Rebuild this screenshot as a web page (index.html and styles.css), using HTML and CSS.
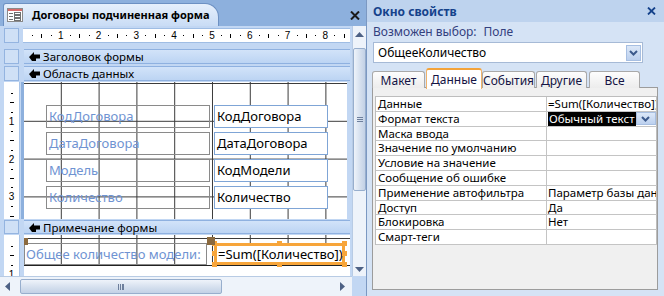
FILE: index.html
```html
<!DOCTYPE html>
<html lang="ru">
<head>
<meta charset="utf-8">
<title>Договоры подчиненная форма</title>
<link rel="stylesheet" href="styles.css">
</head>
<body>
<div class="app">
  <div class="left">
    <div class="doc-strip">
      <div class="doc-tab">
        <svg class="form-icon" width="16" height="14" viewBox="0 0 16 14">
          <rect x="0.5" y="0.5" width="15" height="13" fill="#fff" stroke="#8a8a8a"/>
          <rect x="1" y="1" width="14" height="2" fill="#d86b6b"/>
          <rect x="2" y="5" width="4" height="1" fill="#6f6f6f"/>
          <rect x="2" y="8" width="4" height="1" fill="#6f6f6f"/>
          <rect x="2" y="11" width="4" height="1" fill="#6f6f6f"/>
          <rect x="7.5" y="4.5" width="6" height="2" fill="#fff" stroke="#6f6f6f"/>
          <rect x="7.5" y="7.5" width="6" height="2" fill="#fff" stroke="#6f6f6f"/>
          <rect x="7.5" y="10.5" width="6" height="2" fill="#fff" stroke="#6f6f6f"/>
        </svg>
        <span class="doc-title">Договоры подчиненная форма</span>
      </div>
      <svg class="doc-close" width="10" height="9" viewBox="0 0 10 9">
        <path d="M1 0.5 L9 8.5 M9 0.5 L1 8.5" stroke="#1b1b1b" stroke-width="2"/>
      </svg>
    </div>
    <div class="doc-body">
      <div class="canvas">
        <div class="crow ruler-row">
          <div class="lcol"><div class="corner"></div></div>
          <div class="hruler">
            <div class="cm"><span class="q"><i class="dot"></i></span><span class="q"><i class="bar"></i></span><span class="q"><i class="dot"></i></span><span class="q"><b class="num">1</b></span></div>
            <div class="cm"><span class="q"><i class="dot"></i></span><span class="q"><i class="bar"></i></span><span class="q"><i class="dot"></i></span><span class="q"><b class="num">2</b></span></div>
            <div class="cm"><span class="q"><i class="dot"></i></span><span class="q"><i class="bar"></i></span><span class="q"><i class="dot"></i></span><span class="q"><b class="num">3</b></span></div>
            <div class="cm"><span class="q"><i class="dot"></i></span><span class="q"><i class="bar"></i></span><span class="q"><i class="dot"></i></span><span class="q"><b class="num">4</b></span></div>
            <div class="cm"><span class="q"><i class="dot"></i></span><span class="q"><i class="bar"></i></span><span class="q"><i class="dot"></i></span><span class="q"><b class="num">5</b></span></div>
            <div class="cm"><span class="q"><i class="dot"></i></span><span class="q"><i class="bar"></i></span><span class="q"><i class="dot"></i></span><span class="q"><b class="num">6</b></span></div>
            <div class="cm"><span class="q"><i class="dot"></i></span><span class="q"><i class="bar"></i></span><span class="q"><i class="dot"></i></span><span class="q"><b class="num">7</b></span></div>
            <div class="cm"><span class="q"><i class="dot"></i></span><span class="q"><i class="bar"></i></span><span class="q"><i class="dot"></i></span><span class="q"><b class="num">8</b></span></div>
            <div class="cm"><span class="q"><i class="dot"></i></span><span class="q"><i class="bar"></i></span><span class="q"><i class="dot"></i></span></div>
          </div>
        </div>

        <div class="crow sec-row sec-first">
          <div class="lcol"><div class="vbox"></div></div>
          <div class="secbar"><svg class="sec-arrow" width="11" height="9" viewBox="0 0 11 9"><path d="M0 5 L5 0 L5 2.5 L11 2.5 L11 6.5 L7 6.5 L7 9 L3 9 Z" fill="#000"/></svg><span>Заголовок формы</span></div>
        </div>
        <div class="crow sec-row">
          <div class="lcol"><div class="vbox"></div></div>
          <div class="secbar"><svg class="sec-arrow" width="11" height="9" viewBox="0 0 11 9"><path d="M0 5 L5 0 L5 2.5 L11 2.5 L11 6.5 L7 6.5 L7 9 L3 9 Z" fill="#000"/></svg><span>Область данных</span></div>
        </div>

        <div class="crow detail-row">
          <div class="lcol"><div class="vruler">
            <div class="vcm"><span class="vq"><i class="hdot"></i></span><span class="vq"><i class="hbar"></i></span><span class="vq"><i class="hdot"></i></span><span class="vq"><b class="vnum">1</b></span></div>
            <div class="vcm"><span class="vq"><i class="hdot"></i></span><span class="vq"><i class="hbar"></i></span><span class="vq"><i class="hdot"></i></span><span class="vq"><b class="vnum">2</b></span></div>
            <div class="vcm"><span class="vq"><i class="hdot"></i></span><span class="vq"><i class="hbar"></i></span><span class="vq"><i class="hdot"></i></span><span class="vq"><b class="vnum">3</b></span></div>
            <div class="vcm"><span class="vq"><i class="hdot"></i></span><span class="vq"><i class="hbar"></i></span><span class="vq"><i class="hdot"></i></span></div>
          </div></div>
          <div class="detail grid-bg">
            <div class="ctl-row"><div class="lbl">КодДоговора</div><div class="tb">КодДоговора</div></div>
            <div class="ctl-row"><div class="lbl">ДатаДоговора</div><div class="tb">ДатаДоговора</div></div>
            <div class="ctl-row"><div class="lbl">Модель</div><div class="tb">КодМодели</div></div>
            <div class="ctl-row"><div class="lbl">Количество</div><div class="tb">Количество</div></div>
          </div>
        </div>

        <div class="crow sec-row sec-foot">
          <div class="lcol"><div class="vbox"></div></div>
          <div class="secbar"><svg class="sec-arrow" width="11" height="9" viewBox="0 0 11 9"><path d="M0 5 L5 0 L5 2.5 L11 2.5 L11 6.5 L7 6.5 L7 9 L3 9 Z" fill="#000"/></svg><span>Примечание формы</span></div>
        </div>

        <div class="crow footer-row">
          <div class="lcol"><div class="vruler vruler-foot">
            <div class="vcm"><span class="vq"><i class="hdot"></i></span><span class="vq"><i class="hbar"></i></span><span class="vq"><i class="hdot"></i></span><span class="vq"><b class="vnum">1</b></span></div>
          </div></div>
          <div class="footer">
            <div class="footer-area grid-bg">
              <div class="ctl-row foot-ctls">
                <div class="lbl lbl-foot">Общее количество модели:</div>
                <div class="tb tb-sel">=Sum([Количество])
                  <i class="h h-tl"></i><i class="h h-tm"></i><i class="h h-tr"></i>
                  <i class="h h-ml"></i><i class="h h-mr"></i>
                  <i class="h h-bl"></i><i class="h h-bm"></i><i class="h h-br"></i>
                </div>
              </div>
              <i class="move move-lbl"></i>
              <i class="move move-tb"></i>
            </div>
          </div>
        </div>
      </div>

      <div class="vscroll">
        <svg class="arr" width="9" height="5" viewBox="0 0 9 5"><path d="M0 5 L4.5 0 L9 5 Z" fill="#4d6185"/></svg>
        <div class="vthumb"><span class="grip-v"></span></div>
        <div class="vspace"></div>
        <svg class="arr" width="9" height="5" viewBox="0 0 9 5"><path d="M0 0 L4.5 5 L9 0 Z" fill="#4d6185"/></svg>
      </div>
      <div class="hscroll">
        <svg class="arr" width="5" height="9" viewBox="0 0 5 9"><path d="M5 0 L0 4.5 L5 9 Z" fill="#4d6185"/></svg>
        <div class="hthumb"><span class="grip-h"></span></div>
        <div class="hspace"></div>
        <svg class="arr" width="5" height="9" viewBox="0 0 5 9"><path d="M0 0 L5 4.5 L0 9 Z" fill="#4d6185"/></svg>
      </div>
      <div class="sizer"></div>
    </div>
  </div>

  <div class="right">
    <div class="ptitle">
      <span>Окно свойств</span>
      <svg class="pclose" width="9" height="8" viewBox="0 0 9 8"><path d="M1 0.5 L8 7.5 M8 0.5 L1 7.5" stroke="#15428b" stroke-width="1.8"/></svg>
    </div>
    <div class="psel"><span>Возможен выбор:</span><span class="psel-val">Поле</span></div>
    <div class="combo">
      <span>ОбщееКоличество</span>
      <span class="dd"><svg width="9" height="6" viewBox="0 0 9 6"><path d="M1 1 L4.5 4.5 L8 1" stroke="#3c5a8c" stroke-width="2" fill="none"/></svg></span>
    </div>
    <div class="tabs">
      <div class="tab t1">Макет</div>
      <div class="tab tab-active t2">Данные</div>
      <div class="tab t3">События</div>
      <div class="tab t4">Другие</div>
      <div class="tab t5">Все</div>
    </div>
    <div class="ppanel">
      <div class="pgrid">
        <div class="pr"><div class="pk">Данные</div><div class="pv">=Sum([Количество])</div></div>
        <div class="pr"><div class="pk">Формат текста</div><div class="pv pv-sel"><span class="hl">Обычный текст</span><span class="dd dd-small"><svg width="9" height="6" viewBox="0 0 9 6"><path d="M1 1 L4.5 4.5 L8 1" stroke="#3c5a8c" stroke-width="2" fill="none"/></svg></span></div></div>
        <div class="pr"><div class="pk">Маска ввода</div><div class="pv"></div></div>
        <div class="pr"><div class="pk">Значение по умолчанию</div><div class="pv"></div></div>
        <div class="pr"><div class="pk">Условие на значение</div><div class="pv"></div></div>
        <div class="pr"><div class="pk">Сообщение об ошибке</div><div class="pv"></div></div>
        <div class="pr"><div class="pk">Применение автофильтра</div><div class="pv">Параметр базы данных</div></div>
        <div class="pr"><div class="pk">Доступ</div><div class="pv">Да</div></div>
        <div class="pr"><div class="pk">Блокировка</div><div class="pv">Нет</div></div>
        <div class="pr"><div class="pk">Смарт-теги</div><div class="pv"></div></div>
      </div>
    </div>
  </div>
</div>
</body>
</html>
```

FILE: styles.css
```css
* { box-sizing: border-box; margin: 0; padding: 0; }
html, body { width: 664px; height: 296px; overflow: hidden; }
body { font-family: "Noto Sans", "Open Sans", sans-serif; font-size: 12px; color: #000; background: #d5e3f5; }
i, b { font-style: normal; font-weight: normal; display: block; }

.app { display: flex; width: 664px; height: 296px; }

/* ---------- left document window ---------- */
.left { width: 366px; display: flex; flex-direction: column; background: #8db0dd; }
.doc-strip { height: 26px; display: flex; align-items: flex-end; padding-left: 3px; }
.doc-tab {
  width: 216px; height: 23px;
  background: linear-gradient(#e6f0fc, #c9dcf5);
  border: 1px solid #6d91c3; border-bottom: none;
  border-radius: 3px 14px 0 0;
  display: flex; align-items: center; gap: 9px; padding-left: 3px;
}
.form-icon { flex: none; }
.doc-title { font-weight: bold; font-size: 11px; line-height: 14px; white-space: nowrap; }
.doc-close { margin-left: auto; margin-right: 6px; align-self: center; margin-top: 4px; }

.doc-body { flex: 1; display: grid; grid-template-columns: 352px 14px; grid-template-rows: 250px 20px; }

.canvas { background: #c2d7f3; padding: 2px 2px 0 4px; display: flex; flex-direction: column; overflow: hidden; }
.crow { display: flex; flex: none; }
.lcol { width: 20px; flex: none; }

.ruler-row { height: 15px; }
.corner { width: 15px; height: 15px; background: #cfe0f6; border: 1px solid #94b4e0; }
.hruler { width: 327px; margin-left: -1px; height: 15px; background: #fff; border-top: 1px solid #9fbde4; border-bottom: 1px solid #9fbde4; display: flex; overflow: hidden; }
.cm { width: 37.8px; flex: none; display: flex; }
.q { width: 9.45px; flex: none; display: flex; justify-content: flex-end; align-items: center; }
.dot { width: 1px; height: 1px; background: #000; margin-right: -0.5px; }
.bar { width: 1px; height: 4px; background: #000; margin-right: -0.5px; }
.num { font-size: 10px; line-height: 12px; width: 8px; text-align: center; margin-right: -4px; font-family: "Liberation Sans", sans-serif; }

.sec-row { height: 15px; margin-top: 2px; }
.sec-first { margin-top: 6px; }
.vbox { width: 15px; height: 15px; background: #cfe0f6; border: 1px solid #94b4e0; }
.secbar {
  width: 326px; height: 15px;
  background: linear-gradient(#d2e3f9, #bcd4f3);
  border-top: 1px solid #8fb1e0; border-bottom: 1px solid #8fb1e0;
  display: flex; align-items: center; gap: 3px; padding-left: 5px;
  font-size: 11.5px; line-height: 13px; color: #000;
}
.sec-arrow { flex: none; }

.detail-row { margin-top: 1px; height: 137px; }
.sec-foot { margin-top: 1px; height: 14px; }
.sec-foot .vbox, .sec-foot .secbar { height: 14px; }
.footer-row { margin-top: 1px; flex: 1; }

.vruler { width: 16px; height: 100%; background: #fff; border-right: 1px solid #a9c4e8; padding-top: 2px; display: flex; flex-direction: column; overflow: hidden; }
.vcm { height: 37.8px; flex: none; display: flex; flex-direction: column; }
.vq { height: 9.45px; flex: none; display: flex; align-items: flex-end; justify-content: center; }
.hdot { width: 2px; height: 1px; background: #000; margin-bottom: -0.5px; }
.hbar { width: 4px; height: 1px; background: #000; margin-bottom: -0.5px; }
.vnum { font-size: 10px; line-height: 12px; height: 12px; margin-bottom: -6px; font-family: "Liberation Sans", sans-serif; }
.vruler-foot { padding-top: 2px; }

.grid-bg {
  background-color: #fff;
  background-image:
    linear-gradient(to right, transparent 36.8px, #3a3a3a 36.8px),
    linear-gradient(to bottom, transparent 36.8px, #3a3a3a 36.8px);
  background-size: 37.8px 37.8px;
  background-position: 0 2px;
}
.detail { width: 326px; height: 137px; padding: 23px 0 0 22px; display: flex; flex-direction: column; gap: 4px; border-left: 3px solid #8db0dd; margin-left: -3px; background-clip: padding-box; }

.ctl-row { display: flex; gap: 4px; }
.lbl { width: 164px; height: 23px; border: 1px solid #8a8a8a; background: transparent; color: #6f93d2; font-size: 13px; line-height: 21px; padding-left: 2px; white-space: nowrap; overflow: hidden; }
.tb { width: 114px; height: 23px; border: 1px solid #7fa5d6; background: #fff; color: #000; font-size: 13px; line-height: 21px; padding-left: 2px; white-space: nowrap; }

.footer { width: 326px; display: flex; flex-direction: column; background: #fff; }
.footer-area { position: relative; height: 31px; border-bottom: 1px solid #222; padding-top: 8px; background-position: 0 4px; }
.foot-ctls { gap: 7px; }
.lbl-foot { width: 183px; height: 22px; line-height: 20px; padding-left: 1px; }
.tb-sel { position: relative; width: 131px; height: 22px; border: 3px solid #f7a53a; line-height: 16px; padding-left: 1px; }
.h { position: absolute; width: 5px; height: 5px; background: #f7a53a; }
.h-tl { left: -5px; top: -5px; } .h-tm { left: 60px; top: -5px; } .h-tr { right: -5px; top: -5px; }
.h-ml { left: -5px; top: 5px; } .h-mr { right: -5px; top: 5px; }
.h-bl { left: -5px; bottom: -5px; } .h-bm { left: 60px; bottom: -5px; } .h-br { right: -5px; bottom: -5px; }
.move { position: absolute; background: #8b6a3f; }
.move-lbl { left: 0; top: 3px; width: 4px; height: 7px; }
.move-tb { left: 183px; top: 2px; width: 8px; height: 8px; }

/* scrollbars */
.vscroll { background: #eef3fa; border-left: 1px solid #b8cbe4; display: flex; flex-direction: column; align-items: center; padding-top: 6px; padding-bottom: 4px; }
.vscroll .arr { flex: none; }
.vthumb { width: 13px; height: 143px; margin-top: 11px; border: 1px solid #97aecd; border-radius: 2px; background: linear-gradient(to right, #eef3fa, #d3deed 60%, #c2d1e6); display: flex; align-items: center; justify-content: center; }
.grip-v { width: 6px; height: 5px; border-top: 1px solid #6d7f9c; border-bottom: 1px solid #6d7f9c; background: linear-gradient(#6d7f9c, #6d7f9c) 0 1px / 6px 1px no-repeat; }
.vspace { flex: 1; }
.hscroll { background: #eef3fa; border-top: 1px solid #b8cbe4; display: flex; align-items: center; padding-left: 5px; padding-right: 7px; }
.hthumb { width: 202px; height: 15px; margin-left: 10px; border: 1px solid #97aecd; border-radius: 2px; background: linear-gradient(#eef3fa, #d3deed 60%, #c2d1e6); display: flex; align-items: center; justify-content: center; }
.grip-h { width: 6px; height: 6px; border-left: 1px solid #6d7f9c; border-right: 1px solid #6d7f9c; background: linear-gradient(#6d7f9c, #6d7f9c) 1px 0 / 1px 6px no-repeat, linear-gradient(#6d7f9c, #6d7f9c) 3px 0 / 1px 6px no-repeat; }
.hspace { flex: 1; }
.sizer { background: #c2d7f3; }

/* ---------- right property sheet ---------- */
.right { flex: 1; display: flex; flex-direction: column; background: #d5e3f5; border-left: 1px solid #7b98c2; padding-left: 2px; }
.ptitle { height: 22px; margin-left: -2px; background: #bed3ee; display: flex; align-items: center; padding-left: 6px; padding-right: 8px; font-weight: bold; color: #15428b; font-size: 12px; }
.pclose { margin-left: auto; }
.psel { height: 18px; display: flex; align-items: center; gap: 7px; padding-left: 4px; color: #33407e; font-size: 12px; }
.combo { margin: 2px 21px 0 4px; height: 21px; background: #fff; border: 1px solid #a6bad6; display: flex; align-items: center; padding-left: 4px; padding-right: 1px; font-size: 12px; }
.combo .dd { margin-left: auto; }
.dd { width: 15px; height: 16px; background: linear-gradient(#dce8f8, #bcd0ee); border: 1px solid #a7bfe2; display: flex; align-items: center; justify-content: center; }

.tabs { margin-top: 5px; height: 20px; display: flex; align-items: flex-end; gap: 1px; padding-left: 3px; position: relative; z-index: 1; }
.tab { height: 17px; border: 1px solid #a9a9a9; border-bottom: none; border-radius: 3px 3px 0 0; background: linear-gradient(#fdfdfd, #ececec); display: flex; align-items: center; justify-content: center; font-size: 12px; color: #141444; }
.t1 { width: 53px; } .t2 { width: 56px; } .t3 { width: 53px; margin-left: -1px; } .t4 { width: 51px; } .t5 { width: 51px; margin-left: 1px; }
.tab-active { height: 21px; background: #fff; border-top: 2px solid #f3a33b; border-left-color: #f0b36b; border-right-color: #f0b36b; margin-bottom: -1px; }

.ppanel { margin-left: 3px; width: 286px; height: 203px; margin-top: -1px; background: #f0f0f0; border: 1px solid #9c9c9c; padding: 8px 0 0 2px; }
.pgrid { width: 282px; border-top: 1px solid #bdbdbd; border-left: 1px solid #bdbdbd; background: #fff; }
.pr { display: flex; height: 14.8px; border-bottom: 1px solid #c4c4c4; }
.pk { width: 171px; border-right: 1px solid #c4c4c4; padding-left: 2px; font-size: 11.5px; line-height: 13.8px; white-space: nowrap; overflow: hidden; }
.pv { flex: 1; padding-left: 1px; font-size: 11.5px; line-height: 13.8px; white-space: nowrap; overflow: hidden; border-right: 1px solid #bdbdbd; }
.pv-sel { display: flex; align-items: center; }
.hl { background: #000; color: #fff; padding: 0 1px; line-height: 13.8px; }
.dd-small { margin-left: auto; width: 22px; height: 13px; }
```
